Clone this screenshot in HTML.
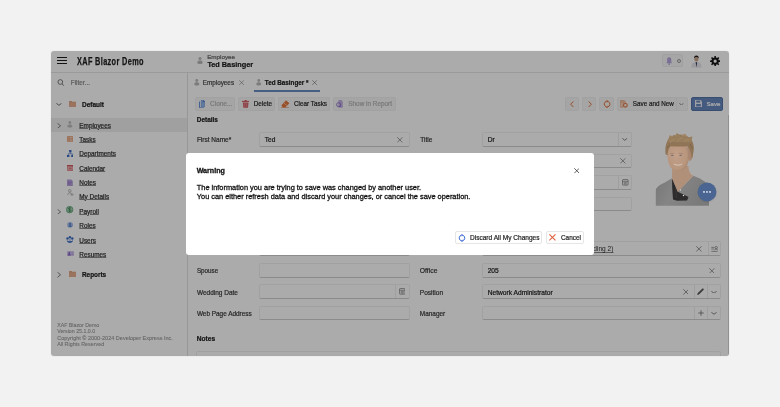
<!DOCTYPE html>
<html><head><meta charset="utf-8"><style>*{box-sizing:border-box;margin:0;padding:0}
html,body{width:780px;height:407px;overflow:hidden;background:#f2f2f2;font-family:"Liberation Sans",sans-serif;color:#242424}
#root{position:absolute;left:0;top:0;width:780px;height:407px;will-change:transform}
.a{position:absolute}
.t{position:absolute;white-space:nowrap;-webkit-text-stroke:0.2px currentColor}
#frame{position:absolute;left:51px;top:51px;width:678px;height:305px;border-radius:3px;overflow:hidden;background:#fff;box-shadow:0 0 0.8px rgba(0,0,0,0.35)}
#app{position:absolute;left:-51px;top:-51px;width:780px;height:407px}
#ov{position:absolute;left:0;top:0;width:678px;height:305px;background:rgba(0,0,0,0.33)}
</style></head><body><div id="root">
<div id="frame"><div id="app">
<div class="a" style="left:51px;top:51px;width:678px;height:22px;background:#fff;border-bottom:1px solid #e6e6e6"></div>
<div class="a" style="left:57px;top:57px;width:10px;height:1.2px;background:#1e1e1e"></div>
<div class="a" style="left:57px;top:60px;width:10px;height:1.2px;background:#1e1e1e"></div>
<div class="a" style="left:57px;top:63px;width:10px;height:1.2px;background:#1e1e1e"></div>
<div class="t" style="left:77px;top:57px;font-size:10.3px;line-height:10.3px;font-weight:700;color:#1e1e1e;transform:scaleX(0.712);transform-origin:0 0;letter-spacing:0.5px;-webkit-text-stroke:0.25px #1e1e1e">XAF Blazor Demo</div>
<svg class="a" style="left:196.6px;top:56.8px" width="6.0" height="7.0" viewBox="0 0 6 7"><circle cx="3" cy="1.6" r="1.5" fill="#b9b9b9"/><path d="M0.3 5.4C0.3 4.2 1.4 3.6 3 3.6S5.7 4.2 5.7 5.4C5.7 6.5 4.6 7 3 7S0.3 6.5 0.3 5.4Z" fill="#b9b9b9"/></svg>
<div class="t" style="left:207.2px;top:54px;font-size:6.25px;line-height:6.25px;font-weight:400;color:#666;">Employee</div>
<div class="t" style="left:207.4px;top:61px;font-size:7.3px;line-height:7.3px;font-weight:700;color:#1a1a1a;">Ted Basinger</div>
<div class="a" style="left:662.2px;top:54.2px;width:21.3px;height:13.3px;border:0.6px solid #efefef;border-radius:2px;background:#f8f8f8"></div>
<svg class="a" style="left:665.8px;top:56.6px" width="6.4" height="8.4" viewBox="0 0 6.4 8.4"><path d="M3.2 0.3C1.6 0.3 1.1 1.5 1.1 3V5.2L0.2 6.3H6.2L5.3 5.2V3C5.3 1.5 4.8 0.3 3.2 0.3Z" fill="#b6a6de"/><rect x="2.5" y="6.3" width="1.4" height="1.9" fill="#b6a6de"/></svg>
<div class="a" style="left:677px;top:59px;width:4px;height:4px;border:0.9px solid #9a9a9a;border-radius:50%"></div>
<svg class="a" style="left:690.5px;top:54.5px" width="11" height="13" viewBox="0 0 11 13"><path d="M0.4 12.5C0.4 8.6 2 7 5.4 7S10.5 8.6 10.5 12.5Z" fill="#e6e6ee"/><path d="M4.7 7.2L5.4 12.5L6.1 7.2Z" fill="#2c3350"/><ellipse cx="5.4" cy="4" rx="2.1" ry="2.6" fill="#c9a48c"/><path d="M3.1 3.6C2.9 1.4 3.9 0.4 5.4 0.4S7.9 1.3 7.7 3.6C7.3 2.5 6.6 2 5.4 2S3.5 2.5 3.1 3.6Z" fill="#231c1c"/></svg>
<svg class="a" style="left:710px;top:55.7px" width="10.3" height="10.3" viewBox="0 0 10.3 10.3"><path fill="#161616" fill-rule="evenodd" d="M8.81 4.35 L10.24 4.38 L10.24 5.92 L8.81 5.95 L8.31 7.17 L9.29 8.21 L8.21 9.29 L7.17 8.31 L5.95 8.81 L5.92 10.24 L4.38 10.24 L4.35 8.81 L3.13 8.31 L2.09 9.29 L1.01 8.21 L1.99 7.17 L1.49 5.95 L0.06 5.92 L0.06 4.38 L1.49 4.35 L1.99 3.13 L1.01 2.09 L2.09 1.01 L3.13 1.99 L4.35 1.49 L4.38 0.06 L5.92 0.06 L5.95 1.49 L7.17 1.99 L8.21 1.01 L9.29 2.09 L8.31 3.13Z M6.75 5.15A1.6 1.6 0 1 0 3.55 5.15A1.6 1.6 0 1 0 6.75 5.15Z"/></svg>
<div class="a" style="left:51px;top:73px;width:137px;height:283px;background:#fff;border-right:0.9px solid #e2e2e2"></div>
<svg class="a" style="left:56.8px;top:78.8px" width="8" height="7" viewBox="0 0 8 7"><circle cx="3.3" cy="3" r="2.35" fill="none" stroke="#555" stroke-width="0.75"/><path d="M5 4.8L6.9 6.6" stroke="#555" stroke-width="0.8"/></svg>
<div class="t" style="left:70.8px;top:80px;font-size:6.4px;line-height:6.4px;font-weight:400;color:#8c8c8c;">Filter...</div>
<svg class="a" style="left:56px;top:103.1px" width="5.9" height="2.7" viewBox="0 0 5.9 2.7"><path d="M0.4 0.4L2.95 2.3000000000000003L5.5 0.4" fill="none" stroke="#444" stroke-width="0.75"/></svg>
<svg class="a" style="left:68.9px;top:101.3px" width="7.3" height="6.2" viewBox="0 0 7.3 6.2"><path d="M0 0.8C0 0.3 0.3 0 0.7 0H2.6L3.3 0.8H6.7C7.1 0.8 7.3 1 7.3 1.4V6.2H0Z" fill="#dfa07e"/><path d="M0 1.6H7.3V6.2H0Z" fill="#e6ad8d"/></svg>
<div class="t" style="left:82px;top:102px;font-size:6.5px;line-height:6.5px;font-weight:700;color:#222;">Default</div>
<div class="a" style="left:51px;top:118.2px;width:136.4px;height:13.4px;background:#efefef"></div>
<div class="t" style="left:79.3px;top:123px;font-size:6.4px;line-height:6.4px;font-weight:400;color:#2e2e2e;text-decoration:underline;text-decoration-thickness:0.5px;text-decoration-color:#8a8a8a;text-underline-offset:0.4px">Employees</div>
<div class="t" style="left:79.3px;top:137px;font-size:6.4px;line-height:6.4px;font-weight:400;color:#2e2e2e;text-decoration:underline;text-decoration-thickness:0.5px;text-decoration-color:#8a8a8a;text-underline-offset:0.4px">Tasks</div>
<div class="t" style="left:79.3px;top:151px;font-size:6.4px;line-height:6.4px;font-weight:400;color:#2e2e2e;text-decoration:underline;text-decoration-thickness:0.5px;text-decoration-color:#8a8a8a;text-underline-offset:0.4px">Departments</div>
<div class="t" style="left:79.3px;top:166px;font-size:6.4px;line-height:6.4px;font-weight:400;color:#2e2e2e;text-decoration:underline;text-decoration-thickness:0.5px;text-decoration-color:#8a8a8a;text-underline-offset:0.4px">Calendar</div>
<div class="t" style="left:79.3px;top:180px;font-size:6.4px;line-height:6.4px;font-weight:400;color:#2e2e2e;text-decoration:underline;text-decoration-thickness:0.5px;text-decoration-color:#8a8a8a;text-underline-offset:0.4px">Notes</div>
<div class="t" style="left:79.3px;top:194px;font-size:6.4px;line-height:6.4px;font-weight:400;color:#2e2e2e;text-decoration:underline;text-decoration-thickness:0.5px;text-decoration-color:#8a8a8a;text-underline-offset:0.4px">My Details</div>
<div class="t" style="left:79.3px;top:209px;font-size:6.4px;line-height:6.4px;font-weight:400;color:#2e2e2e;text-decoration:underline;text-decoration-thickness:0.5px;text-decoration-color:#8a8a8a;text-underline-offset:0.4px">Payroll</div>
<div class="t" style="left:79.3px;top:223px;font-size:6.4px;line-height:6.4px;font-weight:400;color:#2e2e2e;text-decoration:underline;text-decoration-thickness:0.5px;text-decoration-color:#8a8a8a;text-underline-offset:0.4px">Roles</div>
<div class="t" style="left:79.3px;top:238px;font-size:6.4px;line-height:6.4px;font-weight:400;color:#2e2e2e;text-decoration:underline;text-decoration-thickness:0.5px;text-decoration-color:#8a8a8a;text-underline-offset:0.4px">Users</div>
<div class="t" style="left:79.3px;top:252px;font-size:6.4px;line-height:6.4px;font-weight:400;color:#2e2e2e;text-decoration:underline;text-decoration-thickness:0.5px;text-decoration-color:#8a8a8a;text-underline-offset:0.4px">Resumes</div>
<svg class="a" style="left:56.7px;top:122.6px" width="4.5" height="5.6" viewBox="0 0 4.5 5.6"><path d="M0.5 0.3L3.6 2.8L0.5 5.3" fill="none" stroke="#444" stroke-width="0.65"/></svg>
<svg class="a" style="left:67px;top:121.2px" width="5.699999999999999" height="6.6499999999999995" viewBox="0 0 6 7"><circle cx="3" cy="1.6" r="1.5" fill="#bdbdbd"/><path d="M0.3 5.4C0.3 4.2 1.4 3.6 3 3.6S5.7 4.2 5.7 5.4C5.7 6.5 4.6 7 3 7S0.3 6.5 0.3 5.4Z" fill="#bdbdbd"/></svg>
<svg class="a" style="left:67px;top:136.2px" width="6.2" height="6.2" viewBox="0 0 6.2 6.2"><rect x="0.35" y="0.35" width="5.5" height="5.5" rx="0.4" fill="#f6dccd" stroke="#e3905f" stroke-width="0.7"/><path d="M0.4 2.2H5.8M0.4 4H5.8" stroke="#e3905f" stroke-width="0.7"/><path d="M2.1 0.4V5.8" stroke="#e3905f" stroke-width="0.5"/></svg>
<svg class="a" style="left:66.8px;top:150px" width="6.6" height="7.4" viewBox="0 0 6.6 7.4"><rect x="2.1" y="0" width="2.4" height="2.4" fill="#3b6bc6"/><rect x="0" y="5" width="2.4" height="2.4" fill="#3b6bc6"/><rect x="4.2" y="5" width="2.4" height="2.4" fill="#3b6bc6"/><path d="M3.3 2.4V3.8M1.2 5V3.8H5.4V5" fill="none" stroke="#3b6bc6" stroke-width="0.6"/></svg>
<svg class="a" style="left:67px;top:165px" width="6.4" height="5.8" viewBox="0 0 6.4 5.8"><rect x="0.3" y="0.3" width="5.8" height="5.2" rx="0.4" fill="#efb9bc" stroke="#d65a61" stroke-width="0.6"/><rect x="0" y="0" width="6.4" height="1.4" fill="#d65a61"/><rect x="1.8" y="2.6" width="2.8" height="1.8" fill="#de7a80"/></svg>
<svg class="a" style="left:67.4px;top:178.6px" width="5.8" height="7" viewBox="0 0 5.8 7"><path d="M0 0.4H4.3L5.8 1.9V7H0Z" fill="#b7a0db"/><path d="M1 3.3H4.6M1 4.9H3.6" stroke="#8a6cc8" stroke-width="0.6"/></svg>
<svg class="a" style="left:67.2px;top:189.4px" width="6.8" height="6.4" viewBox="0 0 6.8 6.4"><circle cx="2.8" cy="1.8" r="1.3" fill="none" stroke="#8a8a8a" stroke-width="0.55"/><path d="M0.7 6C1 4.6 1.7 3.8 2.8 3.8S4.4 4.3 4.8 5.2M3.8 6.1C4.3 5 5 4.7 5.6 4.9C6.3 5.2 6.3 5.9 5.9 6.2Z" fill="none" stroke="#8a8a8a" stroke-width="0.55"/></svg>
<svg class="a" style="left:56.9px;top:208.7px" width="4.5" height="5.6" viewBox="0 0 4.5 5.6"><path d="M0.5 0.3L3.6 2.8L0.5 5.3" fill="none" stroke="#444" stroke-width="0.65"/></svg>
<svg class="a" style="left:66.4px;top:206.4px" width="7.3" height="7.3" viewBox="0 0 8 8"><circle cx="4" cy="4" r="3.6" fill="#9fd0ad" stroke="#4f9a69" stroke-width="0.7"/><path d="M5.3 2.7C5 2.2 4.5 2 4 2C3.2 2 2.7 2.5 2.7 3.1C2.7 4.4 5.3 3.7 5.3 5C5.3 5.6 4.7 6 4 6C3.4 6 2.9 5.7 2.7 5.3M4 1.3V6.7" fill="none" stroke="#2e6e45" stroke-width="0.6"/></svg>
<svg class="a" style="left:66.9px;top:221.9px" width="6.2" height="5.8" viewBox="0 0 6.2 5.8"><ellipse cx="3.1" cy="2.9" rx="3" ry="2.8" fill="#a9c1ec"/><circle cx="3.1" cy="2.1" r="1" fill="#4a78cc"/><path d="M1.5 4.7C1.7 3.7 2.3 3.3 3.1 3.3S4.5 3.7 4.7 4.7Z" fill="#4a78cc"/></svg>
<svg class="a" style="left:66.3px;top:235.6px" width="7.8" height="7.8" viewBox="0 0 7.8 7.8"><circle cx="1.5" cy="2.6" r="1.25" fill="#3f70c8"/><circle cx="6.3" cy="2.6" r="1.25" fill="#3f70c8"/><circle cx="3.9" cy="1.3" r="1.25" fill="#3f70c8"/><path d="M0.7 4.3C1.2 7.8 6.6 7.8 7.1 4.3C6 5 5 5.2 3.9 5.2S1.8 5 0.7 4.3Z" fill="#3f70c8"/><circle cx="3.9" cy="4" r="1.1" fill="#a9c1ec"/></svg>
<svg class="a" style="left:66.5px;top:251.2px" width="7" height="5.2" viewBox="0 0 7 5.2"><rect x="0" y="0" width="7" height="5.2" rx="0.5" fill="#d3c5ee"/><circle cx="2.3" cy="2" r="1" fill="#7f5fc2"/><path d="M0.8 4.6C1 3.6 1.6 3.1 2.3 3.1S3.6 3.6 3.8 4.6Z" fill="#7f5fc2"/><path d="M4.4 1.9H6.3M4.4 3.3H6.3" stroke="#9b80d0" stroke-width="0.5"/></svg>
<svg class="a" style="left:57px;top:272.4px" width="4.5" height="5.6" viewBox="0 0 4.5 5.6"><path d="M0.5 0.3L3.6 2.8L0.5 5.3" fill="none" stroke="#444" stroke-width="0.65"/></svg>
<svg class="a" style="left:68.9px;top:271.3px" width="7.3" height="6.2" viewBox="0 0 7.3 6.2"><path d="M0 0.8C0 0.3 0.3 0 0.7 0H2.6L3.3 0.8H6.7C7.1 0.8 7.3 1 7.3 1.4V6.2H0Z" fill="#dfa07e"/><path d="M0 1.6H7.3V6.2H0Z" fill="#e6ad8d"/></svg>
<div class="t" style="left:82px;top:272px;font-size:6.4px;line-height:6.4px;font-weight:700;color:#222;">Reports</div>
<div class="t" style="left:57.2px;top:323px;font-size:5.25px;line-height:5.25px;font-weight:400;color:#9a9a9a;-webkit-text-stroke:0.1px #9a9a9a">XAF Blazor Demo</div>
<div class="t" style="left:57.2px;top:329px;font-size:5.25px;line-height:5.25px;font-weight:400;color:#9a9a9a;-webkit-text-stroke:0.1px #9a9a9a">Version 25.1.0.0</div>
<div class="t" style="left:57.2px;top:336px;font-size:5.53px;line-height:5.53px;font-weight:400;color:#9a9a9a;-webkit-text-stroke:0.1px #9a9a9a">Copyright © 2000-2024 Developer Express Inc.</div>
<div class="t" style="left:57.2px;top:342px;font-size:5.35px;line-height:5.35px;font-weight:400;color:#9a9a9a;-webkit-text-stroke:0.1px #9a9a9a">All Rights Reserved</div>
<svg class="a" style="left:194.1px;top:79px" width="5.58" height="6.510000000000001" viewBox="0 0 6 7"><circle cx="3" cy="1.6" r="1.5" fill="#b9b9b9"/><path d="M0.3 5.4C0.3 4.2 1.4 3.6 3 3.6S5.7 4.2 5.7 5.4C5.7 6.5 4.6 7 3 7S0.3 6.5 0.3 5.4Z" fill="#b9b9b9"/></svg>
<div class="t" style="left:202.7px;top:80px;font-size:6.35px;line-height:6.35px;font-weight:400;color:#4a4a4a;">Employees</div>
<svg class="a" style="left:239px;top:80.2px" width="5.2" height="5.2" viewBox="0 0 6 6"><path d="M0.3 0.3L5.7 5.7M5.7 0.3L0.3 5.7" stroke="#6a6a6a" stroke-width="0.6"/></svg>
<svg class="a" style="left:255.5px;top:79px" width="5.58" height="6.510000000000001" viewBox="0 0 6 7"><circle cx="3" cy="1.6" r="1.5" fill="#b9b9b9"/><path d="M0.3 5.4C0.3 4.2 1.4 3.6 3 3.6S5.7 4.2 5.7 5.4C5.7 6.5 4.6 7 3 7S0.3 6.5 0.3 5.4Z" fill="#b9b9b9"/></svg>
<div class="t" style="left:264.8px;top:80px;font-size:6.3px;line-height:6.3px;font-weight:700;color:#222;">Ted Basinger *</div>
<svg class="a" style="left:312px;top:80.2px" width="5.2" height="5.2" viewBox="0 0 6 6"><path d="M0.3 0.3L5.7 5.7M5.7 0.3L0.3 5.7" stroke="#555" stroke-width="0.6"/></svg>
<div class="a" style="left:254.3px;top:90px;width:65.6px;height:1.6px;background:#6a8cc4"></div>
<div class="a" style="left:195px;top:97px;width:40px;height:14px;border:1px solid #f0f0f0;border-radius:2px;background:#f6f6f6"></div>
<svg class="a" style="left:198.8px;top:99.8px" width="6.6" height="8.4" viewBox="0 0 6.6 8.4"><path d="M0.6 1.6V7.9H5" fill="none" stroke="#4a7fd4" stroke-width="0.95"/><path d="M1.9 0.1H4.6L6.3 1.8V6.9H1.9Z" fill="#86ade8"/><path d="M4.4 0.1V2H6.3Z" fill="#3f70c8"/><path d="M2.8 3.2H5.4M2.8 4.4H5.4M2.8 5.6H5.4" stroke="#a9c4ee" stroke-width="0.45"/></svg>
<div class="t" style="left:210px;top:101px;font-size:6.5px;line-height:6.5px;font-weight:400;color:#b4b4b4;">Clone...</div>
<div class="a" style="left:238px;top:97px;width:37px;height:14px;border:1px solid #f0f0f0;border-radius:2px;background:#f6f6f6"></div>
<svg class="a" style="left:242px;top:100px" width="7.3" height="7.7" viewBox="0 0 7.3 7.7"><rect x="0" y="0.9" width="7.3" height="1.1" fill="#d6606a"/><rect x="2.6" y="0" width="2.1" height="1" fill="#d6606a"/><path d="M0.8 2.4H6.5L6 7.7H1.3Z" fill="#d6606a"/><path d="M2.7 3.3V6.8M4.6 3.3V6.8" stroke="#efb3b7" stroke-width="0.5"/></svg>
<div class="t" style="left:253.7px;top:101px;font-size:6.35px;line-height:6.35px;font-weight:400;color:#2a2a2a;">Delete</div>
<div class="a" style="left:278px;top:97px;width:52px;height:14px;border:1px solid #f0f0f0;border-radius:2px;background:#f6f6f6"></div>
<svg class="a" style="left:281.3px;top:100px" width="8.7" height="7.7" viewBox="0 0 8.7 7.7"><path d="M5 0.3L8.4 3.2L4.3 7.4H2L0.3 5.6Z" fill="#e5783c"/><path d="M2.6 2.7L5.9 5.6" stroke="#f6d0ba" stroke-width="0.7"/><path d="M0 7.5H8" stroke="#e5783c" stroke-width="0.5"/></svg>
<div class="t" style="left:294px;top:101px;font-size:6.35px;line-height:6.35px;font-weight:400;color:#2a2a2a;">Clear Tasks</div>
<div class="a" style="left:333px;top:97px;width:63px;height:14px;border:1px solid #f0f0f0;border-radius:2px;background:#f6f6f6"></div>
<svg class="a" style="left:336px;top:100.3px" width="6.8" height="7.6" viewBox="0 0 6.8 7.6"><path d="M2.4 0H5.4L6.8 1.4V7.6H2.4Z" fill="#c2b0e0"/><circle cx="2.6" cy="4.7" r="2" fill="none" stroke="#8461c4" stroke-width="0.8"/><path d="M3.8 6.1L5 7.4" stroke="#8461c4" stroke-width="0.8"/></svg>
<div class="t" style="left:348.3px;top:101px;font-size:6.4px;line-height:6.4px;font-weight:400;color:#b4b4b4;">Show in Report</div>
<div class="a" style="left:565px;top:97px;width:14px;height:14px;border:1px solid #f0f0f0;border-radius:2px;background:#f6f6f6"></div>
<svg class="a" style="left:569.8px;top:100.8px" width="4" height="6.4" viewBox="0 0 4 6.4"><path d="M3.3 0.4L0.7 3.2L3.3 6" fill="none" stroke="#e2743a" stroke-width="1"/></svg>
<div class="a" style="left:582px;top:97px;width:14px;height:14px;border:1px solid #f0f0f0;border-radius:2px;background:#f6f6f6"></div>
<svg class="a" style="left:587.8px;top:100.8px" width="4" height="6.4" viewBox="0 0 4 6.4"><path d="M0.7 0.4L3.3 3.2L0.7 6" fill="none" stroke="#e2743a" stroke-width="1"/></svg>
<div class="a" style="left:599px;top:97px;width:15px;height:14px;border:1px solid #f0f0f0;border-radius:2px;background:#f6f6f6"></div>
<svg class="a" style="left:602.6px;top:99.6px" width="8.2" height="8.2" viewBox="0 0 8 8"><path d="M3.04 6.63A2.8 2.8 0 0 1 3.61 1.23M4.96 1.37A2.8 2.8 0 0 1 4.39 6.77" fill="none" stroke="#e2743a" stroke-width="0.95"/><path d="M5.29 0.99L3.42 -0.12L3.80 2.57ZM2.71 7.01L4.58 8.12L4.20 5.43Z" fill="#e2743a"/></svg>
<div class="a" style="left:617px;top:97px;width:71px;height:14px;border:1px solid #f0f0f0;border-radius:2px;background:#f6f6f6"></div>
<div class="a" style="left:676px;top:98px;width:1px;height:12px;background:#eeeeee"></div>
<svg class="a" style="left:620.3px;top:100px" width="7.8" height="7.8" viewBox="0 0 7.8 7.8"><path d="M0.4 0.4H4.3L5.3 1.4V3H3.2V7.2H0.4Z" fill="#f4d2be" stroke="#e89a72" stroke-width="0.6"/><path d="M1.4 0.6V2.2H3.4V0.6" fill="none" stroke="#e89a72" stroke-width="0.5"/><circle cx="5.4" cy="5.3" r="1.85" fill="none" stroke="#e2743a" stroke-width="1.1"/></svg>
<div class="t" style="left:632.8px;top:101px;font-size:6.3px;line-height:6.3px;font-weight:400;color:#2a2a2a;">Save and New</div>
<svg class="a" style="left:679.4px;top:103.1px" width="4.8" height="2.4" viewBox="0 0 4.8 2.4"><path d="M0.4 0.4L2.4 2.0L4.3999999999999995 0.4" fill="none" stroke="#666" stroke-width="0.75"/></svg>
<div class="a" style="left:691.1px;top:97.1px;width:32px;height:13.6px;border-radius:2px;background:#6686bd;border:0.8px solid #5573a8"></div>
<svg class="a" style="left:694.7px;top:100.3px" width="7" height="7" viewBox="0 0 7 7"><path d="M0 0H5.5L7 1.5V7H0Z" fill="#e9edf5"/><rect x="1.3" y="0.6" width="3.8" height="2" fill="#6686bd"/><rect x="1.2" y="4" width="4.6" height="2.4" fill="#6686bd"/></svg>
<div class="t" style="left:706.5px;top:101px;font-size:6.1px;line-height:6.1px;font-weight:400;color:#fff;">Save</div>
<div class="t" style="left:196.8px;top:117px;font-size:6.45px;line-height:6.45px;font-weight:700;color:#222;">Details</div>
<div class="t" style="left:196.9px;top:137px;font-size:6.5px;line-height:6.5px;font-weight:400;color:#3a3a3a;">First Name*</div>
<div class="a" style="left:259px;top:132px;width:151px;height:15px;border:1px solid #f1f1f1;border-bottom:1px solid #cfcfcf;border-radius:2px;background:#fff"></div>
<div class="t" style="left:264.8px;top:137px;font-size:6.6px;line-height:6.6px;font-weight:400;color:#222;">Ted</div>
<svg class="a" style="left:397px;top:137px" width="5.7" height="5.7" viewBox="0 0 6 6"><path d="M0.3 0.3L5.7 5.7M5.7 0.3L0.3 5.7" stroke="#5a5a5a" stroke-width="0.65"/></svg>
<div class="t" style="left:420.2px;top:137px;font-size:6.55px;line-height:6.55px;font-weight:400;color:#3a3a3a;">Title</div>
<div class="a" style="left:482px;top:132px;width:150px;height:15px;border:1px solid #f1f1f1;border-bottom:1px solid #cfcfcf;border-radius:2px;background:#fff"></div>
<div class="t" style="left:487.8px;top:137px;font-size:6.6px;line-height:6.6px;font-weight:400;color:#222;">Dr</div>
<div class="a" style="left:618px;top:133px;width:1px;height:13px;background:#eeeeee"></div>
<svg class="a" style="left:622px;top:138.3px" width="5.5" height="2.7" viewBox="0 0 5.5 2.7"><path d="M0.4 0.4L2.75 2.3000000000000003L5.1 0.4" fill="none" stroke="#5a5a5a" stroke-width="0.75"/></svg>
<div class="a" style="left:482px;top:154px;width:150px;height:14px;border:1px solid #f1f1f1;border-bottom:1px solid #cfcfcf;border-radius:2px;background:#fff"></div>
<svg class="a" style="left:620px;top:158.4px" width="5.7" height="5.7" viewBox="0 0 6 6"><path d="M0.3 0.3L5.7 5.7M5.7 0.3L0.3 5.7" stroke="#5a5a5a" stroke-width="0.65"/></svg>
<div class="a" style="left:482px;top:175px;width:150px;height:15px;border:1px solid #f1f1f1;border-bottom:1px solid #cfcfcf;border-radius:2px;background:#fff"></div>
<div class="a" style="left:618px;top:176px;width:1px;height:13px;background:#eeeeee"></div>
<svg class="a" style="left:622px;top:179.3px" width="6.5" height="6.5" viewBox="0 0 6.5 6.5"><rect x="0.4" y="0.6" width="5.7" height="5.5" rx="0.8" fill="none" stroke="#5a5a5a" stroke-width="0.6"/><path d="M0.4 2.3H6.1M1.7 3.7H4.8M1.7 4.9H4.8" stroke="#5a5a5a" stroke-width="0.55"/></svg>
<div class="a" style="left:482px;top:197px;width:150px;height:14px;border:1px solid #f1f1f1;border-bottom:1px solid #cfcfcf;border-radius:2px;background:#fff"></div>
<div class="a" style="left:259px;top:241px;width:151px;height:15px;border:1px solid #f1f1f1;border-bottom:1px solid #cfcfcf;border-radius:2px;background:#fff"></div>
<div class="a" style="left:482px;top:241px;width:239px;height:15px;border:1px solid #f1f1f1;border-bottom:1px solid #cfcfcf;border-radius:2px;background:#fff"></div>
<div class="t" style="left:487.7px;top:246px;font-size:6.58px;line-height:6.58px;font-weight:400;color:#333;-webkit-text-stroke:0;text-decoration:underline;text-decoration-thickness:0.5px;text-decoration-color:#888;text-underline-offset:1.2px">Human Resources Department (Building 2)</div>
<svg class="a" style="left:696.3px;top:246px" width="5.8" height="5.8" viewBox="0 0 6 6"><path d="M0.3 0.3L5.7 5.7M5.7 0.3L0.3 5.7" stroke="#5a5a5a" stroke-width="0.65"/></svg>
<div class="a" style="left:708px;top:242px;width:1px;height:13px;background:#eeeeee"></div>
<svg class="a" style="left:711.3px;top:246px" width="7" height="6" viewBox="0 0 7 6"><path d="M0.3 1.4H3.4M0.3 3H3M0.3 5.4H6.7" stroke="#5a5a5a" stroke-width="0.55"/><circle cx="5.2" cy="1.6" r="1.2" fill="none" stroke="#5a5a5a" stroke-width="0.55"/><path d="M3.6 4.3C3.8 3.4 4.4 3.1 5.2 3.1S6.6 3.4 6.8 4.3" fill="none" stroke="#5a5a5a" stroke-width="0.55"/></svg>
<div class="t" style="left:196.9px;top:268px;font-size:6.3px;line-height:6.3px;font-weight:400;color:#3a3a3a;">Spouse</div>
<div class="a" style="left:259px;top:263px;width:151px;height:15px;border:1px solid #f1f1f1;border-bottom:1px solid #cfcfcf;border-radius:2px;background:#fff"></div>
<div class="t" style="left:419.8px;top:268px;font-size:6.8px;line-height:6.8px;font-weight:400;color:#3a3a3a;">Office</div>
<div class="a" style="left:482px;top:263px;width:239px;height:15px;border:1px solid #f1f1f1;border-bottom:1px solid #cfcfcf;border-radius:2px;background:#fff"></div>
<div class="t" style="left:487.7px;top:268px;font-size:6.6px;line-height:6.6px;font-weight:400;color:#222;">205</div>
<svg class="a" style="left:709px;top:267.8px" width="5.7" height="5.7" viewBox="0 0 6 6"><path d="M0.3 0.3L5.7 5.7M5.7 0.3L0.3 5.7" stroke="#5a5a5a" stroke-width="0.65"/></svg>
<div class="t" style="left:196.9px;top:290px;font-size:6.5px;line-height:6.5px;font-weight:400;color:#3a3a3a;">Wedding Date</div>
<div class="a" style="left:259px;top:284px;width:151px;height:15px;border:1px solid #f1f1f1;border-bottom:1px solid #cfcfcf;border-radius:2px;background:#fff"></div>
<div class="a" style="left:395px;top:285px;width:1px;height:13px;background:#eeeeee"></div>
<svg class="a" style="left:398.9px;top:288.3px" width="6.5" height="6.5" viewBox="0 0 6.5 6.5"><rect x="0.4" y="0.6" width="5.7" height="5.5" rx="0.8" fill="none" stroke="#5a5a5a" stroke-width="0.6"/><path d="M0.4 2.3H6.1M1.7 3.7H4.8M1.7 4.9H4.8" stroke="#5a5a5a" stroke-width="0.55"/></svg>
<div class="t" style="left:419.8px;top:290px;font-size:6.55px;line-height:6.55px;font-weight:400;color:#3a3a3a;">Position</div>
<div class="a" style="left:482px;top:284px;width:239px;height:15px;border:1px solid #f1f1f1;border-bottom:1px solid #cfcfcf;border-radius:2px;background:#fff"></div>
<div class="t" style="left:487.7px;top:290px;font-size:6.65px;line-height:6.65px;font-weight:400;color:#222;">Network Administrator</div>
<svg class="a" style="left:682.5px;top:289.4px" width="5.9" height="5.9" viewBox="0 0 6 6"><path d="M0.3 0.3L5.7 5.7M5.7 0.3L0.3 5.7" stroke="#5a5a5a" stroke-width="0.65"/></svg>
<div class="a" style="left:694px;top:285px;width:1px;height:13px;background:#eeeeee"></div>
<svg class="a" style="left:697.2px;top:288px" width="7.4" height="7.4" viewBox="0 0 7.4 7.4"><path d="M0.3 7.1L0.6 5.3L5.2 0.7C5.6 0.3 6.1 0.3 6.5 0.7C6.9 1.1 6.9 1.6 6.5 2L1.9 6.6Z" fill="#555"/></svg>
<div class="a" style="left:707px;top:285px;width:1px;height:13px;background:#eeeeee"></div>
<svg class="a" style="left:711.3px;top:290.9px" width="6" height="2.6" viewBox="0 0 6 2.6"><path d="M0.4 0.4L3.0 2.2L5.6 0.4" fill="none" stroke="#5a5a5a" stroke-width="0.75"/></svg>
<div class="t" style="left:196.9px;top:311px;font-size:6.43px;line-height:6.43px;font-weight:400;color:#3a3a3a;">Web Page Address</div>
<div class="a" style="left:259px;top:306px;width:151px;height:14px;border:1px solid #f1f1f1;border-bottom:1px solid #cfcfcf;border-radius:2px;background:#fff"></div>
<div class="t" style="left:419.8px;top:311px;font-size:6.45px;line-height:6.45px;font-weight:400;color:#3a3a3a;">Manager</div>
<div class="a" style="left:482px;top:306px;width:239px;height:14px;border:1px solid #f1f1f1;border-bottom:1px solid #cfcfcf;border-radius:2px;background:#fff"></div>
<div class="a" style="left:694px;top:307px;width:1px;height:12px;background:#eeeeee"></div>
<svg class="a" style="left:697.8px;top:310.4px" width="6" height="6" viewBox="0 0 6 6"><path d="M3 0.2V5.8M0.2 3H5.8" stroke="#555" stroke-width="0.65"/></svg>
<div class="a" style="left:707px;top:307px;width:1px;height:12px;background:#eeeeee"></div>
<svg class="a" style="left:711.3px;top:312.3px" width="6" height="2.6" viewBox="0 0 6 2.6"><path d="M0.4 0.4L3.0 2.2L5.6 0.4" fill="none" stroke="#5a5a5a" stroke-width="0.75"/></svg>
<div class="t" style="left:196.8px;top:336px;font-size:6.6px;line-height:6.6px;font-weight:700;color:#222;">Notes</div>
<div class="a" style="left:196px;top:351px;width:525px;height:20px;border:1px solid #f1f1f1;border-bottom:1px solid #cfcfcf;border-radius:2px;background:#fff"></div>
<div class="a" style="left:727.6px;top:115px;width:1.2px;height:241px;background:#d9d9d9"></div>
</div><div id="ov"></div></div>
<svg class="a" style="left:650px;top:130px" width="70" height="80" viewBox="0 0 70 80">
 <defs><clipPath id="pc"><rect x="5.8" y="0" width="53.2" height="75.8"/></clipPath>
 <linearGradient id="sh" x1="0" y1="0" x2="1" y2="0.3"><stop offset="0" stop-color="#767676"/><stop offset="0.45" stop-color="#858585"/><stop offset="1" stop-color="#7a7a7a"/></linearGradient>
 <radialGradient id="fc" cx="0.42" cy="0.45" r="0.6"><stop offset="0" stop-color="#c29f88"/><stop offset="0.8" stop-color="#b8957d"/><stop offset="1" stop-color="#a8866f"/></radialGradient></defs>
 <g clip-path="url(#pc)">
  <path d="M5 76V63C5 58 9 55 14 53L22 48.3L27.8 61.8L43.3 45.7L50 48.5L56 52.5L59 55V76Z" fill="url(#sh)"/>
  <path d="M22 48.3L27.8 61.8L38.5 67L37 70.5L27 70.8L23 69.5L22.2 58Z" fill="#2d2b2b"/>
  <path d="M26 52.5C25.5 57 26 63 26.5 68" stroke="#444" stroke-width="0.5" fill="none"/>
  <circle cx="28.2" cy="56" r="0.75" fill="#d8d8d8"/><circle cx="30.5" cy="60" r="0.7" fill="#d8d8d8"/><circle cx="33.5" cy="65.5" r="0.75" fill="#d8d8d8"/>
  <path d="M22.2 36L22 48.3L27.8 61.8L43.3 45.7C40 44 38.5 41 38.5 36Z" fill="#b09079"/>
  
  <path d="M17.4 25C17.2 16 21.5 12.5 28.2 12.5S39.2 16 39.2 25C39.2 35 34.5 41.3 28.2 41.3S17.4 35 17.4 25Z" fill="url(#fc)"/>
  <ellipse cx="39.4" cy="27.5" rx="1.7" ry="3.2" fill="#ae8c75"/>
  <path d="M38 16L42.5 17L43 27L40.5 31L38.5 28Z" fill="#a88670"/>
  <path d="M15.5 24C14.5 14 18 6 26.5 4.6C35.5 3.4 43.5 8 43.8 17C44 21 43 25 41.8 28.5C41 22.5 40 18.5 37 16C33 17 26 16.5 20.5 16.2C18.5 18.5 17.8 21.5 17.5 25.5Z" fill="#8f7556"/>
  <path d="M17 12L20 5L24 8L27 3L31 6.5L35 3.5L37.5 7.5L42.5 6.5L41 12.5Z" fill="#997e5d"/>
  <path d="M20 13C21 11 23 10 24.5 9M27 12C28 10 30 8.5 32 8M34 11.5C35.5 10 37.5 9.5 39.5 10M22 7C23.5 6 25 5.5 26.5 5.5M31 5.5C33 5 35 5.2 36.5 6" stroke="#a78c69" stroke-width="0.8" fill="none"/>
  <path d="M17 18L20 15M40 14L42.5 19" stroke="#7a6247" stroke-width="0.8" fill="none"/>
  <path d="M23.8 34C25.8 35.5 30.3 35.5 32.2 34" stroke="#d8c8bc" stroke-width="1" fill="none"/>
  <path d="M20 23.8L24 23.4M28.5 23.4L33 23.6" stroke="#9a7a66" stroke-width="0.6"/>
  <ellipse cx="22.3" cy="25.3" rx="1.3" ry="0.65" fill="#6f6a72"/><ellipse cx="30.6" cy="25.3" rx="1.3" ry="0.65" fill="#6f6a72"/>
 </g>
 <circle cx="57.3" cy="62.6" r="9.8" fill="rgba(0,0,0,0.08)"/><circle cx="57" cy="61.9" r="9.4" fill="#4a6591"/>
 <circle cx="54" cy="61.9" r="0.9" fill="#e8ecf3"/><circle cx="57" cy="61.9" r="0.9" fill="#e8ecf3"/><circle cx="60" cy="61.9" r="0.9" fill="#e8ecf3"/>
</svg>
<div class="a" style="left:186px;top:153px;width:408px;height:102px;background:#fff;border-radius:3px"></div>
<div class="t" style="left:196.7px;top:167.6px;font-size:7.1px;line-height:7.1px;font-weight:700;color:#141414;-webkit-text-stroke:0.3px #141414">Warning</div>
<div class="t" style="left:196.8px;top:184px;font-size:7.38px;line-height:7.38px;font-weight:400;color:#141414;-webkit-text-stroke:0.3px #141414">The information you are trying to save was changed by another user.</div>
<div class="t" style="left:196.8px;top:193px;font-size:7.38px;line-height:7.38px;font-weight:400;color:#141414;-webkit-text-stroke:0.3px #141414">You can either refresh data and discard your changes, or cancel the save operation.</div>
<svg class="a" style="left:573.8px;top:168px" width="5.5" height="5.5" viewBox="0 0 6 6"><path d="M0.3 0.3L5.7 5.7M5.7 0.3L0.3 5.7" stroke="#262626" stroke-width="0.8"/></svg>
<div class="a" style="left:455.4px;top:230.9px;width:87px;height:13.6px;border:0.7px solid #e6e6e6;border-radius:2px;background:#fff"></div>
<svg class="a" style="left:458.4px;top:233.6px" width="8" height="8" viewBox="0 0 8 8"><path d="M3.04 6.63A2.8 2.8 0 0 1 3.61 1.23M4.96 1.37A2.8 2.8 0 0 1 4.39 6.77" fill="none" stroke="#2f5fd0" stroke-width="0.95"/><path d="M5.29 0.99L3.42 -0.12L3.80 2.57ZM2.71 7.01L4.58 8.12L4.20 5.43Z" fill="#2f5fd0"/></svg>
<div class="t" style="left:470px;top:235px;font-size:6.55px;line-height:6.55px;font-weight:400;color:#1e1e1e;">Discard All My Changes</div>
<div class="a" style="left:546px;top:230.9px;width:37.8px;height:13.6px;border:0.7px solid #e6e6e6;border-radius:2px;background:#fff"></div>
<svg class="a" style="left:549.3px;top:234.1px" width="6.8" height="6.8" viewBox="0 0 6 6"><path d="M0.3 0.3L5.7 5.7M5.7 0.3L0.3 5.7" stroke="#e0603c" stroke-width="0.95"/></svg>
<div class="t" style="left:561px;top:235px;font-size:6.4px;line-height:6.4px;font-weight:400;color:#1e1e1e;">Cancel</div>
</div></body></html>
